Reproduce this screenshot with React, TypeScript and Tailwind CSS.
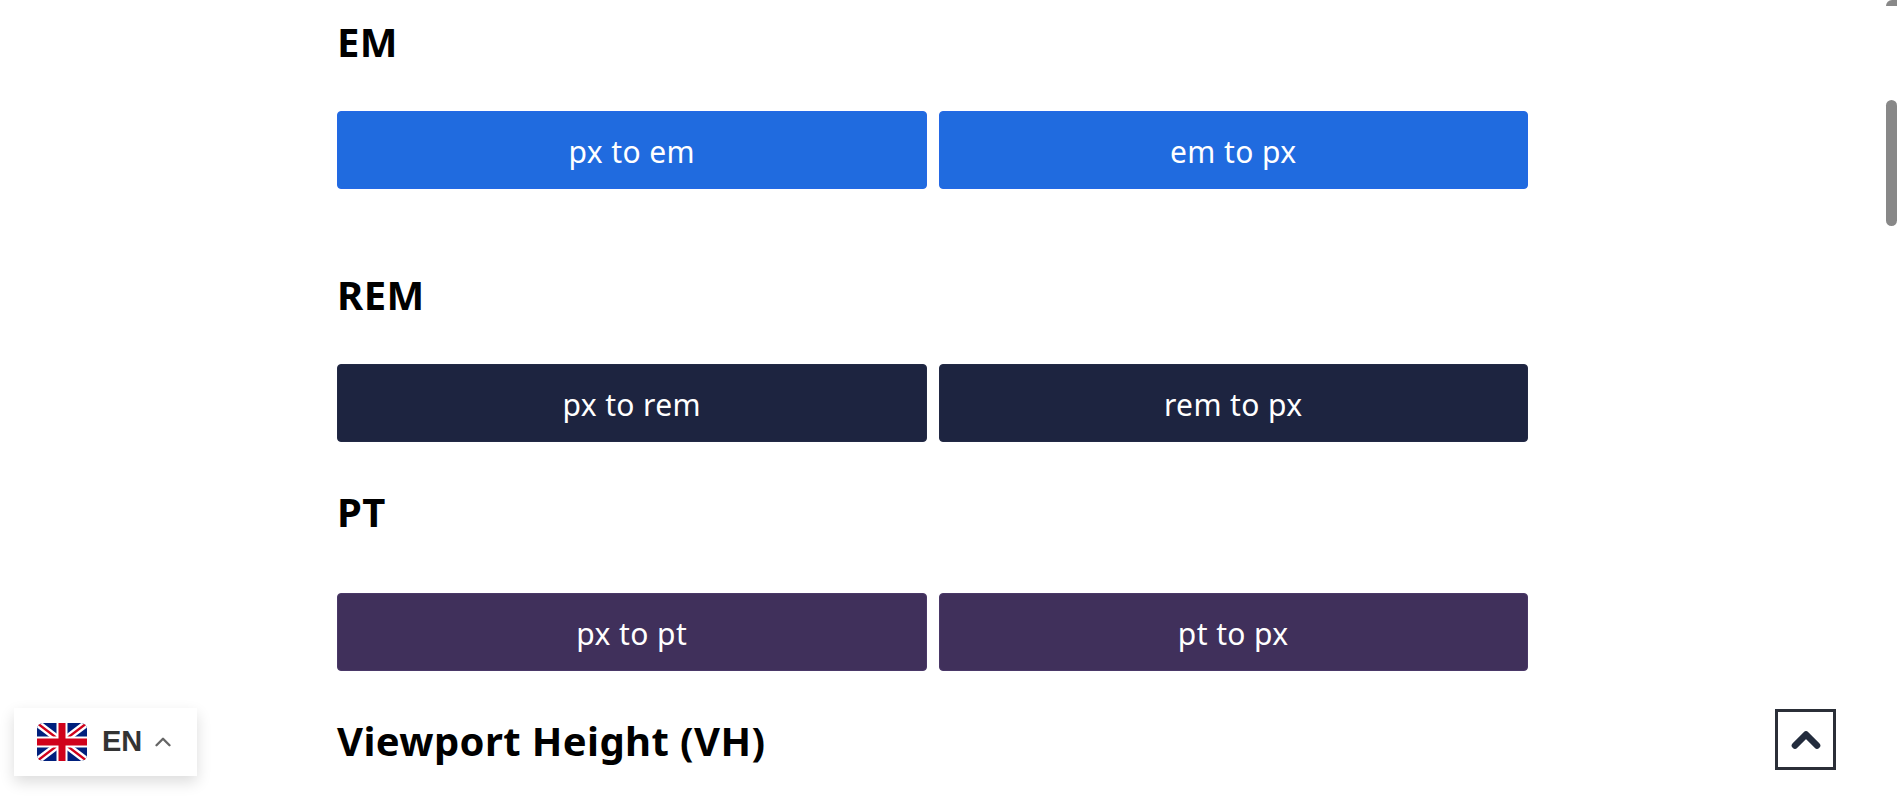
import { ChevronUp } from "lucide-react";

function Row({ heading, a, b, bg, border, mt, mb }: { heading: string; a: string; b: string; bg: string; border: string; mt: string; mb: string }) {
  return (
    <section className={mt}>
      <h2 className={`text-[40px] leading-[52px] font-bold text-black tracking-[0.4px] ${mb}`}>{heading}</h2>
      <div className="flex gap-[12px]">
        <a className={`flex-1 h-[78px] pt-[2px] flex items-center justify-center rounded-[4px] border text-white text-[30px] tracking-[0.4px] ${bg} ${border}`}>{a}</a>
        <a className={`flex-1 h-[78px] pt-[2px] flex items-center justify-center rounded-[4px] border text-white text-[30px] tracking-[0.4px] ${bg} ${border}`}>{b}</a>
      </div>
    </section>
  );
}

export default function App() {
  return (
    <div className="relative h-[799px] w-full overflow-hidden bg-white font-['Noto_Sans','Open_Sans',sans-serif]">
      <main className="ml-[337px] w-[1191px] pt-[16px]">
        <Row heading="EM" a="px to em" b="em to px" bg="bg-[#206bdf]" border="border-[#2468e6]" mt="mt-0" mb="mb-[43px]" />
        <Row heading="REM" a="px to rem" b="rem to px" bg="bg-[#1d2440]" border="border-[#222945]" mt="mt-[80px]" mb="mb-[43px]" />
        <Row heading="PT" a="px to pt" b="pt to px" bg="bg-[#40305b]" border="border-[#4a3868]" mt="mt-[44px]" mb="mb-[55px]" />
        <h2 className="mt-[44px] text-[40px] leading-[52px] font-bold text-black tracking-[0.4px]">Viewport Height (VH)</h2>
      </main>

      <div className="absolute left-[14px] top-[708px] w-[183px] h-[68px] bg-white flex items-center shadow-[0_6px_14px_rgba(0,0,0,0.14)]">
        <svg className="ml-[23px]" width="50" height="38" viewBox="0 0 50 38">
          <defs>
            <clipPath id="flag"><rect width="50" height="38" rx="6" /></clipPath>
          </defs>
          <g clipPath="url(#flag)">
            <rect width="50" height="38" fill="#00207d" />
            <path d="M0 0L50 38M50 0L0 38" stroke="#fff" strokeWidth="7" />
            <path d="M0 0L50 38M50 0L0 38" stroke="#d0021b" strokeWidth="2.4" />
            <path d="M25 0V38M0 19H50" stroke="#fff" strokeWidth="11" />
            <path d="M25 0V38M0 19H50" stroke="#d0021b" strokeWidth="7" />
          </g>
        </svg>
        <span className="ml-[15px] text-[29px] font-bold text-[#333] font-['Liberation_Sans',sans-serif]">EN</span>
        <ChevronUp className="ml-[8px] text-[#666]" size={26} strokeWidth={2.2} />
      </div>

      <div className="absolute left-[1775px] top-[709px] w-[61px] h-[61px] border-[3px] border-[#2b2f38] flex items-center justify-center">
        <ChevronUp className="text-[#232c3d]" size={44} strokeWidth={3.6} />
      </div>

      <div className="absolute left-[1886px] top-0 w-[11px] h-[6px] bg-[#888] rounded-tl-[6px]" />
      <div className="absolute left-[1886px] top-[100px] w-[11px] h-[126px] bg-[#888] rounded-[6px]" />
    </div>
  );
}
